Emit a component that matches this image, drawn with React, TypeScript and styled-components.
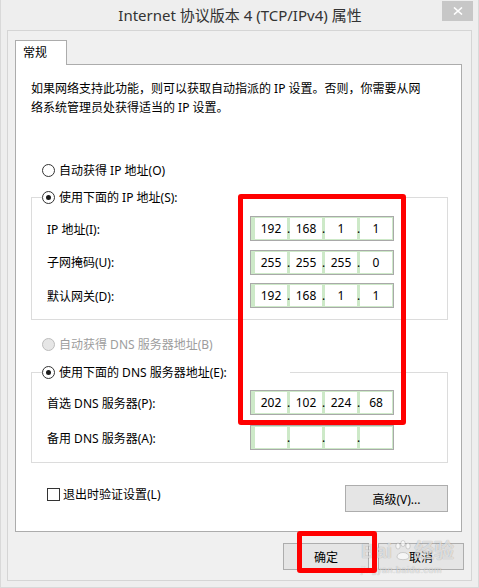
import styled, { createGlobalStyle } from 'styled-components';

const GlobalStyle = createGlobalStyle`
  html, body {
    margin: 0;
    padding: 0;
    background: #eeeeee;
  }
  body {
    font-family: 'Noto Sans', 'Noto Sans CJK SC', sans-serif;
    font-size: 12px;
    color: #000;
  }
  * {
    box-sizing: border-box;
  }
`;

const Window = styled.div`
  position: relative;
  width: 479px;
  height: 588px;
  background: #eeeeee;
  border: 1px solid #d9d9d9;
  border-top: none;
  padding: 0 6px 6px;
  display: flex;
  flex-direction: column;
`;

const TitleBar = styled.div`
  height: 30px;
  margin: 0 -6px;
  padding: 0 5px 0 37px;
  display: flex;
  flex-shrink: 0;
`;

const Title = styled.div`
  flex: 1;
  text-align: center;
  font-size: 15px;
  line-height: 30px;
  color: #333;
  white-space: nowrap;
`;

const CloseButton = styled.div`
  width: 31px;
  height: 20px;
  margin-top: 1px;
  background: #c7c7c7;
  display: flex;
  align-items: center;
  justify-content: center;
`;

const Client = styled.div`
  flex: 1;
  border: 1px solid #d5d5d5;
  background: #f0f0f0;
  padding: 9px 0 0 7px;
  display: flex;
  flex-direction: column;
`;

const TabStrip = styled.div`
  display: flex;
`;

const Tab = styled.div`
  position: relative;
  z-index: 1;
  width: 52px;
  height: 25px;
  margin-bottom: -1px;
  padding-left: 7px;
  border: 1px solid #acacac;
  border-bottom: none;
  background: #fff;
  line-height: 23px;
`;

const Panel = styled.div`
  width: 447px;
  height: 468px;
  border: 1px solid #acacac;
  background: #fff;
  padding: 0 13px 0 15px;
  display: flex;
  flex-direction: column;
`;

const Description = styled.p`
  margin: 13.5px 0 0;
  line-height: 19px;
  white-space: nowrap;
`;

const RadioRow = styled.label<{ disabled?: boolean; top?: number }>`
  display: flex;
  align-items: center;
  height: 20px;
  margin-top: ${p => p.top ?? 0}px;
  margin-left: 11px;
  color: ${p => (p.disabled ? '#9d9d9d' : '#000')};
  white-space: nowrap;
`;

const Radio = styled.span<{ checked?: boolean; disabled?: boolean }>`
  position: relative;
  width: 13px;
  height: 13px;
  margin-right: 4px;
  border-radius: 50%;
  border: 1px solid ${p => (p.disabled ? '#bcbcbc' : '#333')};
  background: ${p => (p.disabled ? '#e6e6e6' : '#fff')};
  flex-shrink: 0;

  &::after {
    content: '';
    display: ${p => (p.checked ? 'block' : 'none')};
    position: absolute;
    left: 3px;
    top: 3px;
    width: 5px;
    height: 5px;
    border-radius: 50%;
    background: #1a1a1a;
  }
`;

const Group = styled.fieldset<{ top: number; padTop: number; padBottom: number }>`
  margin: ${p => p.top}px 0 0;
  padding: ${p => p.padTop}px 0 ${p => p.padBottom}px 10px;
  border: 1px solid #dcdcdc;
  min-width: 0;
`;

const Legend = styled.legend`
  padding: 0;
  width: 248px;
  height: 20px;
  background: #fff;
`;

const LegendInner = styled.span`
  display: flex;
  align-items: center;
  height: 20px;
  white-space: nowrap;
`;

const FieldGrid = styled.div<{ gap: number }>`
  display: grid;
  grid-template-columns: 208px 144px;
  row-gap: ${p => p.gap}px;
  align-items: center;
`;

const FieldLabel = styled.span`
  padding-left: 5px;
  white-space: nowrap;
`;

const IpBox = styled.div`
  width: 144px;
  height: 25px;
  border: 1px solid #a9a9a9;
  background: #cde9c8;
  padding: 1px 1px 1px 4px;
  display: flex;
`;

const Octet = styled.span`
  width: 32px;
  background: #fff;
  display: flex;
  align-items: center;
  justify-content: center;
  color: #000;
`;

const Dot = styled.span`
  width: 3px;
  display: flex;
  align-items: center;
  justify-content: center;
  overflow: visible;
`;

const Footer = styled.div`
  margin-top: 22px;
  display: flex;
  justify-content: space-between;
  align-items: flex-start;
`;

const CheckRow = styled.label`
  display: flex;
  align-items: center;
  height: 18px;
  margin-left: 16px;
  white-space: nowrap;
`;

const CheckBox = styled.span`
  width: 13px;
  height: 13px;
  margin-right: 3px;
  border: 1px solid #333;
  background: #fff;
`;

const Button = styled.div<{ w: number }>`
  width: ${p => p.w}px;
  height: 27px;
  border: 1px solid #adadad;
  background: #e5e5e5;
  display: flex;
  align-items: center;
  justify-content: center;
  white-space: nowrap;
`;

const ButtonBar = styled.div`
  margin-top: 11px;
  padding-right: 7px;
  display: flex;
  justify-content: flex-end;
  gap: 9px;
`;

const Highlight = styled.div<{ x: number; y: number; w: number; h: number }>`
  position: absolute;
  left: ${p => p.x}px;
  top: ${p => p.y}px;
  width: ${p => p.w}px;
  height: ${p => p.h}px;
  border: 5px solid #ff0000;
  border-radius: 3px;
  pointer-events: none;
`;

const Watermark = styled.div`
  position: absolute;
  left: 360px;
  top: 538px;
  color: rgba(255, 255, 255, 0.65);
  text-shadow: 0 0 1px rgba(0, 0, 0, 0.18), 0 0 1px rgba(0, 0, 0, 0.18);
  pointer-events: none;
`;

const WatermarkLogo = styled.div`
  display: flex;
  align-items: flex-end;
  gap: 2px;
  height: 24px;
  font-family: 'Liberation Sans', 'Noto Sans CJK SC', sans-serif;
  font-weight: bold;
  font-size: 20px;
  line-height: 22px;
`;

const WatermarkUrl = styled.div`
  margin-top: 4px;
  font-family: 'Liberation Sans', sans-serif;
  font-size: 9px;
  line-height: 9px;
  letter-spacing: 0.5px;
`;

const IpField = ({ value }: { value?: string[] }) => {
  const parts = value ?? ['', '', '', ''];
  return (
    <IpBox>
      {parts.map((p, i) => [
        <Octet key={`o${i}`}>{p}</Octet>,
        i < 3 ? <Dot key={`d${i}`}>.</Dot> : null,
      ])}
    </IpBox>
  );
};

export default function App() {
  return (
    <>
      <GlobalStyle />
      <Window>
        <TitleBar>
          <Title>Internet 协议版本 4 (TCP/IPv4) 属性</Title>
          <CloseButton>
            <svg width="10" height="8" viewBox="0 0 10 8">
              <path d="M1 0.5 L9 7.5 M9 0.5 L1 7.5" stroke="#fff" strokeWidth="1.6" />
            </svg>
          </CloseButton>
        </TitleBar>
        <Client>
          <TabStrip>
            <Tab>常规</Tab>
          </TabStrip>
          <Panel>
            <Description>
              如果网络支持此功能，则可以获取自动指派的 IP 设置。否则，你需要从网
              <br />
              络系统管理员处获得适当的 IP 设置。
            </Description>

            <RadioRow top={43.5}>
              <Radio />
              自动获得 IP 地址(O)
            </RadioRow>

            <Group top={7} padTop={9} padBottom={11}>
              <Legend>
                <LegendInner>
                  <Radio checked />
                  使用下面的 IP 地址(S):
                </LegendInner>
              </Legend>
              <FieldGrid gap={8.5}>
                <FieldLabel>IP 地址(I):</FieldLabel>
                <IpField value={['192', '168', '1', '1']} />
                <FieldLabel>子网掩码(U):</FieldLabel>
                <IpField value={['255', '255', '255', '0']} />
                <FieldLabel>默认网关(D):</FieldLabel>
                <IpField value={['192', '168', '1', '1']} />
              </FieldGrid>
            </Group>

            <RadioRow top={14} disabled>
              <Radio disabled />
              自动获得 DNS 服务器地址(B)
            </RadioRow>

            <Group top={8} padTop={8} padBottom={12}>
              <Legend>
                <LegendInner>
                  <Radio checked />
                  使用下面的 DNS 服务器地址(E):
                </LegendInner>
              </Legend>
              <FieldGrid gap={10}>
                <FieldLabel>首选 DNS 服务器(P):</FieldLabel>
                <IpField value={['202', '102', '224', '68']} />
                <FieldLabel>备用 DNS 服务器(A):</FieldLabel>
                <IpField />
              </FieldGrid>
            </Group>

            <Footer>
              <CheckRow>
                <CheckBox />
                退出时验证设置(L)
              </CheckRow>
              <Button w={103}>高级(V)...</Button>
            </Footer>
          </Panel>
          <ButtonBar>
            <Button w={86}>确定</Button>
            <Button w={86}>取消</Button>
          </ButtonBar>
        </Client>

        <Watermark>
          <WatermarkLogo>
            <span>Bai</span>
            <svg width="18" height="22" viewBox="0 0 18 22">
              <g fill="rgba(255,255,255,0.65)" stroke="rgba(0,0,0,0.15)" strokeWidth="1">
                <ellipse cx="4" cy="6" rx="2.2" ry="3" />
                <ellipse cx="9" cy="3.5" rx="2.2" ry="3" />
                <ellipse cx="14" cy="6" rx="2.2" ry="3" />
                <path d="M3 17 C3 11 15 11 15 17 C15 20.5 3 20.5 3 17 Z" />
              </g>
            </svg>
            <span>经验</span>
          </WatermarkLogo>
          <WatermarkUrl>jingyan.baidu.com</WatermarkUrl>
        </Watermark>

        <Highlight x={237} y={194} w={168} h={231} />
        <Highlight x={296} y={531} w={80} h={42} />
      </Window>
    </>
  );
}
